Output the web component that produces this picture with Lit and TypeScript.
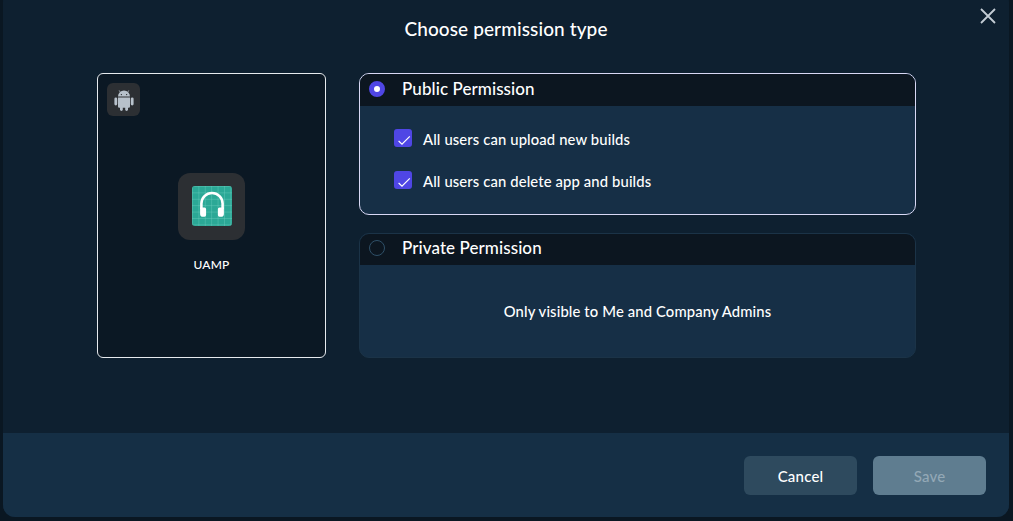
import { LitElement, html, css } from 'lit';
import { customElement } from 'lit/decorators.js';

const androidIcon = html`<svg viewBox="0 0 20 22" width="20" height="22">
  <path fill="#b7c1cb" d="M4 7.600a6 6 0 0 1 12 0zM4 8.600h12v9a1.200 1.200 0 0 1-1.200 1.200H5.200A1.200 1.200 0 0 1 4 17.600z"/>
  <rect fill="#b7c1cb" x="0.400" y="8.400" width="2.800" height="8" rx="1.400"/>
  <rect fill="#b7c1cb" x="16.800" y="8.400" width="2.800" height="8" rx="1.400"/>
  <rect fill="#b7c1cb" x="6" y="17" width="2.800" height="5" rx="1.400"/>
  <rect fill="#b7c1cb" x="11.200" y="17" width="2.800" height="5" rx="1.400"/>
  <path stroke="#b7c1cb" stroke-width=".8" d="M6.400 3.400 5.200 1.400M13.600 3.400l1.200-2"/>
  <circle fill="#2c2f33" cx="7.400" cy="5.600" r=".7"/><circle fill="#2c2f33" cx="12.600" cy="5.600" r=".7"/>
</svg>`;

const headphones = html`<svg viewBox="0 0 40 40" width="40" height="40">
  <defs>
    <pattern id="grid" width="6.400" height="6.400" patternUnits="userSpaceOnUse">
      <path d="M6.400 0H0V6.400" fill="none" stroke="#6fd0c0" stroke-width=".7"/>
    </pattern>
  </defs>
  <rect width="40" height="40" rx="3" fill="#2ba896"/>
  <rect width="40" height="40" rx="3" fill="url(#grid)"/>
  <path fill="none" stroke="#fff" stroke-width="2.600" d="M9.400 23v-5.400a10.600 10.600 0 0 1 21.200 0v5.400"/>
  <path fill="#fff" d="M8.100 21.500h4.400a1.600 1.600 0 0 1 1.600 1.600v6a1.600 1.600 0 0 1-1.600 1.600h-1.600a2.800 2.800 0 0 1-2.800-2.800zM31.900 21.500h-4.400a1.600 1.600 0 0 0-1.600 1.600v6a1.600 1.600 0 0 0 1.600 1.600h1.600a2.800 2.800 0 0 0 2.800-2.800z"/>
</svg>`;

const check = html`<svg viewBox="0 0 18 18" width="18" height="18">
  <path d="M4.600 12 8 15.200 15.800 7.400" fill="none" stroke="#fff" stroke-width="1.200"/>
</svg>`;

@customElement('app-root')
export class AppRoot extends LitElement {
  static styles = css`
    :host {
      display: block;
      height: 521px;
      overflow: hidden;
      background: #0a1722;
      font-family: "Lato", "Noto Sans", sans-serif;
      color: #fff;
    }

    .modal {
      display: flex;
      flex-direction: column;
      height: 527px;
      margin: -10px 4px 0 3px;
      border-radius: 12px;
      overflow: hidden;
      background: #0e2030;
      position: relative;
    }

    .close {
      position: absolute;
      top: 16px;
      right: 11px;
      width: 20px;
      height: 20px;
      color: #c3ccd4;
    }

    h1 {
      margin: 0;
      padding-top: 27px;
      height: 56px;
      box-sizing: border-box;
      text-align: center;
      font-size: 19px;
      line-height: 24px;
      font-weight: 500;
      letter-spacing: 0.1px;
    }

    .content {
      flex: 1;
      display: flex;
      align-items: flex-start;
      gap: 33px;
      padding: 27px 93px 0 94px;
    }

    .app-card {
      width: 229px;
      height: 285px;
      flex: none;
      box-sizing: border-box;
      border: 1px solid #e6eaee;
      border-radius: 6px;
      background: #0b1824;
      padding: 9px;
      display: flex;
      flex-direction: column;
      align-items: center;
    }

    .platform {
      align-self: flex-start;
      width: 33px;
      height: 33px;
      border-radius: 6px;
      background: #2c2f33;
      display: flex;
      align-items: center;
      justify-content: center;
    }

    .app-icon {
      margin-top: 57px;
      width: 67px;
      height: 67px;
      box-sizing: border-box;
      padding: 13px 13px 14px 14px;
      border-radius: 12px;
      background: #2c2f33;
    }

    .app-icon svg {
      display: block;
    }

    .app-name {
      margin-top: 17px;
      font-size: 12px;
      line-height: 16px;
      font-weight: 500;
      letter-spacing: 0.2px;
    }

    .options {
      flex: 1;
      display: flex;
      flex-direction: column;
      gap: 18px;
    }

    .option {
      box-sizing: border-box;
      border: 1px solid #1b3347;
      border-radius: 10px;
      overflow: hidden;
      background: #162f46;
    }

    .option.selected {
      border-color: #d8d8f4;
    }

    .option-head {
      height: 31px;
      box-sizing: border-box;
      padding: 0 0 3px 9px;
      display: flex;
      align-items: center;
      gap: 17px;
      background: #0c1620;
      font-size: 17px;
      font-weight: 500;
      letter-spacing: 0.08px;
    }

    .selected .option-head {
      height: 32px;
      padding-bottom: 2px;
    }

    .option-head .label {
      padding-bottom: 1px;
    }

    .radio {
      width: 16px;
      height: 16px;
      box-sizing: border-box;
      border-radius: 50%;
      border: 1px solid #2f5068;
    }

    .radio.on {
      border: 5px solid #4f46e5;
      background: #fff;
    }

    .checks {
      height: 108px;
      box-sizing: border-box;
      padding: 23px 0 0 34px;
      display: flex;
      flex-direction: column;
      gap: 24px;
    }

    .check-row {
      display: flex;
      align-items: center;
      gap: 11px;
      height: 18px;
      font-size: 14.800px;
      font-weight: 500;
      letter-spacing: 0.13px;
    }

    .check-row .label {
      padding-top: 2px;
    }

    .box {
      width: 18px;
      height: 18px;
      border-radius: 3px;
      background: #4f46e5;
      flex: none;
    }

    .note {
      height: 92px;
      display: flex;
      align-items: center;
      justify-content: center;
      font-size: 14.800px;
      font-weight: 500;
      letter-spacing: 0.13px;
    }

    .footer {
      height: 84px;
      flex: none;
      box-sizing: border-box;
      background: #152f45;
      display: flex;
      justify-content: flex-end;
      gap: 16px;
      padding: 23px 23px 0 0;
    }

    button {
      width: 113px;
      height: 39px;
      border: none;
      border-radius: 6px;
      font: inherit;
      font-size: 15px;
      font-weight: 500;
      letter-spacing: 0.2px;
      color: #fff;
      background: #2e4a5e;
    }

    button[disabled] {
      background: #5f7d90;
      color: #93a8b6;
    }
  `;

  render() {
    return html`
      <div class="modal">
        <svg class="close" viewBox="0 0 20 20" fill="none" stroke="currentColor" stroke-width="1.800">
          <path d="M3 3l14 14M17 3 3 17"/>
        </svg>
        <h1>Choose permission type</h1>
        <div class="content">
          <div class="app-card">
            <div class="platform">${androidIcon}</div>
            <div class="app-icon">${headphones}</div>
            <div class="app-name">UAMP</div>
          </div>
          <div class="options">
            <div class="option selected">
              <div class="option-head"><span class="radio on"></span><span class="label">Public Permission</span></div>
              <div class="checks">
                <div class="check-row"><span class="box">${check}</span><span class="label">All users can upload new builds</span></div>
                <div class="check-row"><span class="box">${check}</span><span class="label">All users can delete app and builds</span></div>
              </div>
            </div>
            <div class="option">
              <div class="option-head"><span class="radio"></span><span class="label">Private Permission</span></div>
              <div class="note">Only visible to Me and Company Admins</div>
            </div>
          </div>
        </div>
        <div class="footer">
          <button>Cancel</button>
          <button disabled>Save</button>
        </div>
      </div>
    `;
  }
}
